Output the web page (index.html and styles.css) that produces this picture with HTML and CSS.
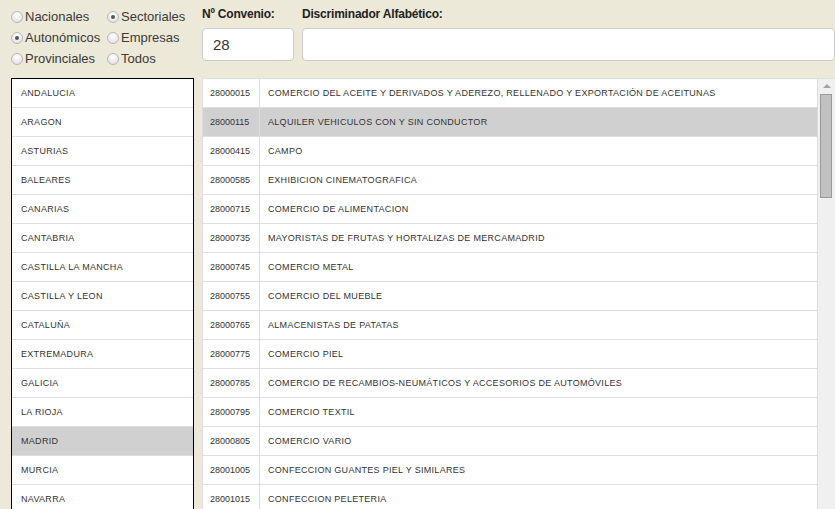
FILE: index.html
```html
<html>
<head>
    <title>Convenios</title>
    <link rel="stylesheet" href="styles.css">
</head>
<body>
    <div class="app">
        <section class="filters">
            <div class="radios">
                <label class="radio"><span class="dot"></span>Nacionales</label>
                <label class="radio"><span class="dot on"></span>Sectoriales</label>
                <label class="radio"><span class="dot on"></span>Autonómicos</label>
                <label class="radio"><span class="dot"></span>Empresas</label>
                <label class="radio"><span class="dot"></span>Provinciales</label>
                <label class="radio"><span class="dot"></span>Todos</label>
            </div>
            <div class="field field-num">
                <div class="field-name">Nº Convenio:</div>
                <div class="input">28</div>
            </div>
            <div class="field field-alpha">
                <div class="field-name">Discriminador Alfabético:</div>
                <div class="input"></div>
            </div>
        </section>
        <section class="content">
            <div class="regions">
                <div class="region">ANDALUCIA</div>
                <div class="region">ARAGON</div>
                <div class="region">ASTURIAS</div>
                <div class="region">BALEARES</div>
                <div class="region">CANARIAS</div>
                <div class="region">CANTABRIA</div>
                <div class="region">CASTILLA LA MANCHA</div>
                <div class="region">CASTILLA Y LEON</div>
                <div class="region">CATALUÑA</div>
                <div class="region">EXTREMADURA</div>
                <div class="region">GALICIA</div>
                <div class="region">LA RIOJA</div>
                <div class="region selected">MADRID</div>
                <div class="region">MURCIA</div>
                <div class="region">NAVARRA</div>
            </div>
            <div class="agreements">
                <div class="rows">
                    <div class="row"><span class="code">28000015</span><span class="desc">COMERCIO DEL ACEITE Y DERIVADOS Y ADEREZO, RELLENADO Y EXPORTACIÓN DE ACEITUNAS</span></div>
                    <div class="row selected"><span class="code">28000115</span><span class="desc">ALQUILER VEHICULOS CON Y SIN CONDUCTOR</span></div>
                    <div class="row"><span class="code">28000415</span><span class="desc">CAMPO</span></div>
                    <div class="row"><span class="code">28000585</span><span class="desc">EXHIBICION CINEMATOGRAFICA</span></div>
                    <div class="row"><span class="code">28000715</span><span class="desc">COMERCIO DE ALIMENTACION</span></div>
                    <div class="row"><span class="code">28000735</span><span class="desc">MAYORISTAS DE FRUTAS Y HORTALIZAS DE MERCAMADRID</span></div>
                    <div class="row"><span class="code">28000745</span><span class="desc">COMERCIO METAL</span></div>
                    <div class="row"><span class="code">28000755</span><span class="desc">COMERCIO DEL MUEBLE</span></div>
                    <div class="row"><span class="code">28000765</span><span class="desc">ALMACENISTAS DE PATATAS</span></div>
                    <div class="row"><span class="code">28000775</span><span class="desc">COMERCIO PIEL</span></div>
                    <div class="row"><span class="code">28000785</span><span class="desc">COMERCIO DE RECAMBIOS-NEUMÁTICOS Y ACCESORIOS DE AUTOMÓVILES</span></div>
                    <div class="row"><span class="code">28000795</span><span class="desc">COMERCIO TEXTIL</span></div>
                    <div class="row"><span class="code">28000805</span><span class="desc">COMERCIO VARIO</span></div>
                    <div class="row"><span class="code">28001005</span><span class="desc">CONFECCION GUANTES PIEL Y SIMILARES</span></div>
                    <div class="row"><span class="code">28001015</span><span class="desc">CONFECCION PELETERIA</span></div>
                </div>
                <div class="scrollbar">
                    <div class="arrow"></div>
                    <div class="thumb"></div>
                </div>
            </div>
        </section>
    </div>
</body>
</html>
```

FILE: styles.css
```css
html, body {
    margin: 0;
    padding: 0;
    background: #ece9d8;
    font-family: "Liberation Sans", Arial, sans-serif;
    color: #333;
    overflow: hidden;
}

.app {
    width: 835px;
    height: 509px;
    overflow: hidden;
}

.filters {
    display: flex;
    height: 78px;
    box-sizing: border-box;
    padding-top: 6px;
}

.radios {
    display: grid;
    grid-template-columns: 96px 94px;
    grid-auto-rows: 21px;
    padding-left: 11px;
    align-content: start;
}

.radio {
    display: flex;
    align-items: center;
    font-size: 13px;
    color: #3a3a3a;
    height: 21px;
}

.dot {
    width: 10px;
    height: 10px;
    border: 1px solid #b8b8b8;
    border-radius: 50%;
    background: radial-gradient(circle at 50% 30%, #ffffff, #dcdcdc);
    margin-right: 2px;
    position: relative;
    flex: none;
}

.dot.on::after {
    content: "";
    position: absolute;
    left: 3px;
    top: 3px;
    width: 4px;
    height: 4px;
    border-radius: 50%;
    background: #555;
}

.field {
    margin-left: 1px;
}

.field-num {
    width: 92px;
}

.field-alpha {
    margin-left: 8px;
    width: 533px;
}

.field-name {
    font-size: 12px;
    font-weight: bold;
    letter-spacing: -0.2px;
    color: #222;
    height: 22px;
    line-height: 16px;
}

.input {
    box-sizing: border-box;
    height: 33px;
    border: 1px solid #ccc;
    border-radius: 4px;
    background: #fff;
    font-size: 15px;
    line-height: 31px;
    padding-left: 10px;
    color: #333;
}

.content {
    display: flex;
    align-items: flex-start;
}

.regions {
    margin-left: 11px;
    width: 183px;
    box-sizing: border-box;
    border: 1px solid #000;
    background: #fff;
}

.region,
.row {
    height: 29px;
    box-sizing: border-box;
    border-bottom: 1px solid #ddd;
    font-size: 9px;
    letter-spacing: 0.3px;
    line-height: 28px;
    color: #333;
}

.region {
    padding-left: 9px;
}

.selected {
    background: #d1d0d1;
}

.agreements {
    margin-left: 8px;
    width: 633px;
    display: flex;
    border-top: 1px solid #ddd;
    box-sizing: border-box;
}

.rows {
    flex: 1;
    background: #fff;
    border-left: 1px solid #ddd;
}

.row {
    display: flex;
}

.code {
    width: 57px;
    flex: none;
    box-sizing: border-box;
    padding-left: 7px;
    border-right: 1px solid #ddd;
    letter-spacing: 0;
}

.desc {
    padding-left: 8px;
    white-space: nowrap;
}

.scrollbar {
    width: 17px;
    flex: none;
    background: #f0f0f0;
    border-left: 1px solid #ddd;
    height: 440px;
    position: relative;
}

.arrow {
    position: absolute;
    left: 5px;
    top: 5px;
    width: 0;
    height: 0;
    border-left: 4px solid transparent;
    border-right: 4px solid transparent;
    border-bottom: 4px solid #a3a3a3;
}

.thumb {
    position: absolute;
    left: 2px;
    top: 15px;
    width: 10px;
    height: 102px;
    background: #c1c1c1;
    border: 1px solid #999;
}
```
